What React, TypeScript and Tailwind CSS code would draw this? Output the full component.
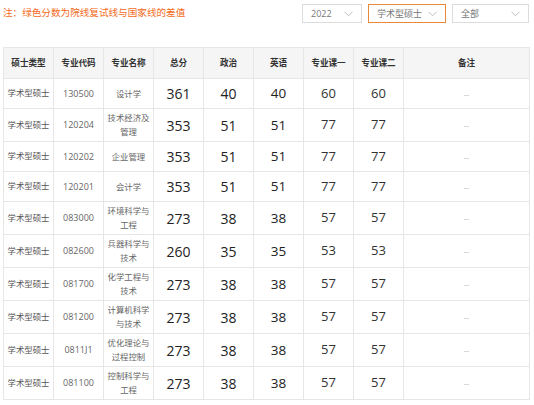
import React from 'react';

type Row = {
    type: string;
    code: string;
    name: string[];
    total: number;
    politics: number;
    english: number;
    major1: number;
    major2: number;
};

const rows: Row[] = [
    { type: '学术型硕士', code: '130500', name: ['设计学'], total: 361, politics: 40, english: 40, major1: 60, major2: 60 },
    { type: '学术型硕士', code: '120204', name: ['技术经济及', '管理'], total: 353, politics: 51, english: 51, major1: 77, major2: 77 },
    { type: '学术型硕士', code: '120202', name: ['企业管理'], total: 353, politics: 51, english: 51, major1: 77, major2: 77 },
    { type: '学术型硕士', code: '120201', name: ['会计学'], total: 353, politics: 51, english: 51, major1: 77, major2: 77 },
    { type: '学术型硕士', code: '083000', name: ['环境科学与', '工程'], total: 273, politics: 38, english: 38, major1: 57, major2: 57 },
    { type: '学术型硕士', code: '082600', name: ['兵器科学与', '技术'], total: 260, politics: 35, english: 35, major1: 53, major2: 53 },
    { type: '学术型硕士', code: '081700', name: ['化学工程与', '技术'], total: 273, politics: 38, english: 38, major1: 57, major2: 57 },
    { type: '学术型硕士', code: '081200', name: ['计算机科学', '与技术'], total: 273, politics: 38, english: 38, major1: 57, major2: 57 },
    { type: '学术型硕士', code: '0811J1', name: ['优化理论与', '过程控制'], total: 273, politics: 38, english: 38, major1: 57, major2: 57 },
    { type: '学术型硕士', code: '081100', name: ['控制科学与', '工程'], total: 273, politics: 38, english: 38, major1: 57, major2: 57 },
];

const headers = ['硕士类型', '专业代码', '专业名称', '总分', '政治', '英语', '专业课一', '专业课二', '备注'];

const Chevron = () => (
    <svg width="9" height="6" viewBox="0 0 9 6" fill="none" stroke="#b8b8b8" strokeWidth="0.9">
        <path d="M0.5 0.8 L4.5 4.8 L8.5 0.8" />
    </svg>
);

const Select: React.FC<{ label: string; active?: boolean; width: string }> = ({ label, active, width }) => (
    <div className={`${width} h-[19px] flex items-center justify-between pl-[8px] pr-[8px] border ${active ? 'border-[#e8893a]' : 'border-[#dcdcdc]'} bg-white`}>
        <span className="text-[9px] text-[#777]">{label}</span>
        <Chevron />
    </div>
);

const App: React.FC = () => {
    const cell = 'border border-[#e6e6e6] text-center align-middle p-0';
    return (
        <div className="w-[534px] h-[405px] overflow-hidden bg-white" style={{ fontFamily: '"Open Sans", "Noto Sans CJK SC", sans-serif' }}>
            <div className="flex items-start justify-between pl-[3px] pr-[5px] pt-[4px]">
                <div className="text-[9.6px] leading-[18px] text-[#f46a1a]">注：绿色分数为院线复试线与国家线的差值</div>
                <div className="flex gap-[6px]">
                    <Select label="2022" width="w-[60px]" />
                    <Select label="学术型硕士" active width="w-[78px]" />
                    <Select label="全部" width="w-[77px]" />
                </div>
            </div>

            <table className="mt-[24px] ml-[3px] w-[526px] table-fixed border-collapse">
                <colgroup>
                    <col className="w-[50px]" />
                    <col className="w-[50px]" />
                    <col className="w-[50px]" />
                    <col className="w-[50px]" />
                    <col className="w-[50px]" />
                    <col className="w-[50px]" />
                    <col className="w-[50px]" />
                    <col className="w-[50px]" />
                    <col className="w-[126px]" />
                </colgroup>
                <thead>
                    <tr className="bg-[#f5f5f5] h-[31px]">
                        {headers.map(h => (
                            <th key={h} className={`${cell} text-[8.6px] font-bold text-[#333]`}>{h}</th>
                        ))}
                    </tr>
                </thead>
                <tbody>
                    {rows.map(r => (
                        <tr key={r.code} className={r.name.length > 1 ? 'h-[33px]' : 'h-[30px]'}>
                            <td className={`${cell} text-[8.4px] text-[#555]`}>{r.type}</td>
                            <td className={`${cell} text-[9px] text-[#666]`}>{r.code}</td>
                            <td className={`${cell} text-[8.4px] leading-[14px] text-[#666]`}>
                                {r.name.map(n => <div key={n}>{n}</div>)}
                            </td>
                            <td className={`${cell} text-[14px] text-[#222]`}>{r.total}</td>
                            <td className={`${cell} text-[14px] text-[#222]`}>{r.politics}</td>
                            <td className={`${cell} text-[13.5px] text-[#222]`}>{r.english}</td>
                            <td className={`${cell} text-[13px] text-[#333]`}>{r.major1}</td>
                            <td className={`${cell} text-[13px] text-[#333]`}>{r.major2}</td>
                            <td className={`${cell} text-[8px] text-[#aaa]`}>--</td>
                        </tr>
                    ))}
                </tbody>
            </table>
        </div>
    );
};

export default App;
